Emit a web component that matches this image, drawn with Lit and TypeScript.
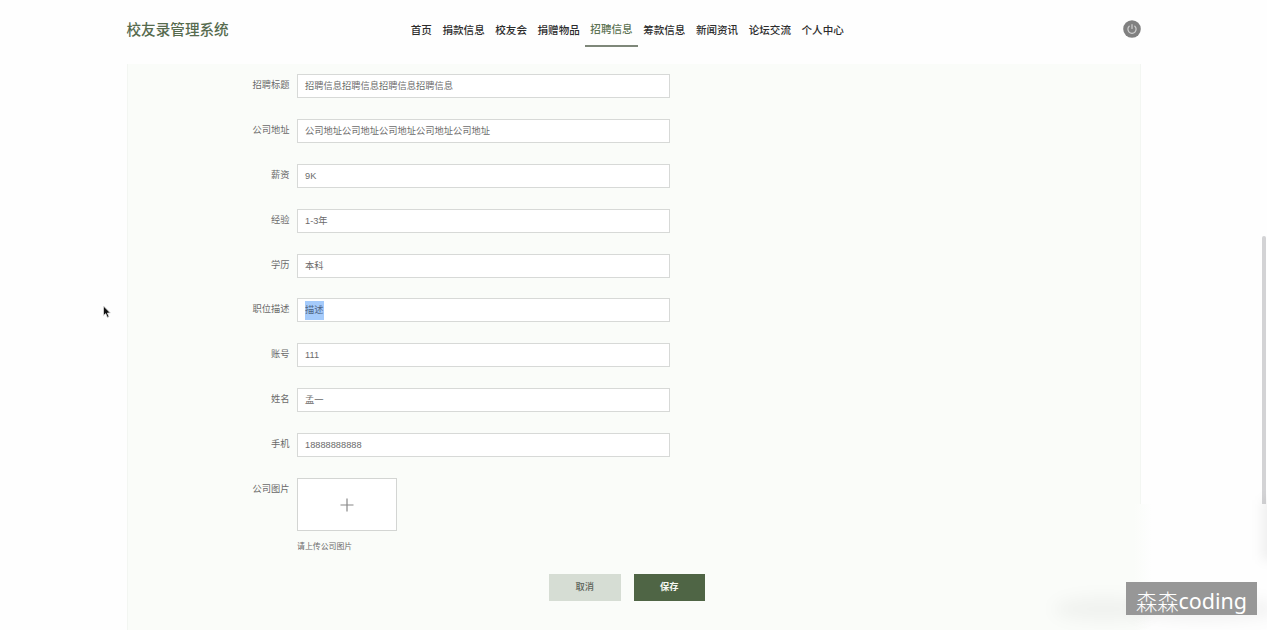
import { LitElement, html, css } from "lit";
import { customElement } from "lit/decorators.js";
import { classMap } from "lit/directives/class-map.js";

const NAV = ["首页", "捐款信息", "校友会", "捐赠物品", "招聘信息", "筹款信息", "新闻资讯", "论坛交流", "个人中心"];

const FIELDS: { label: string; value: string; selected?: boolean }[] = [
  { label: "招聘标题", value: "招聘信息招聘信息招聘信息招聘信息" },
  { label: "公司地址", value: "公司地址公司地址公司地址公司地址公司地址" },
  { label: "薪资", value: "9K" },
  { label: "经验", value: "1-3年" },
  { label: "学历", value: "本科" },
  { label: "职位描述", value: "描述", selected: true },
  { label: "账号", value: "111" },
  { label: "姓名", value: "孟一" },
  { label: "手机", value: "18888888888" },
];

@customElement("site-header")
export class SiteHeader extends LitElement {
  static styles = css`
    :host { display: block; }
    .bar {
      display: grid;
      grid-template-columns: 279px 1fr auto;
      align-items: start;
      height: 64px;
      margin: 0 126.5px;
      box-sizing: border-box;
      padding-top: 12px;
    }
    .brand { font-size: 14.6px; line-height: 36px; font-weight: 500; color: #566b4e; }
    .nav { display: flex; }
    .item {
      box-sizing: border-box;
      height: 35px;
      padding: 0 5.3px;
      font-size: 10.56px;
      line-height: 36px;
      font-weight: 500;
      color: #2c2c2c;
      white-space: nowrap;
    }
    .active { color: #5d7354; line-height: 35px; border-bottom: 2px solid #7e8779; }
    .power { display: block; width: 18px; height: 18px; margin-top: 8px; }
  `;
  render() {
    return html`<header class="bar">
      <div class="brand">校友录管理系统</div>
      <nav class="nav">
        ${NAV.map((n) => html`<a class=${classMap({ item: true, active: n === "招聘信息" })}>${n}</a>`)}
      </nav>
      <svg class="power" viewBox="0 0 18 18" fill="none" stroke-linecap="round">
        <circle cx="9" cy="9" r="8.8" fill="#808080" />
        <path d="M6.2 6.2A4.1 4.1 0 1 0 11.8 6.2M9 4.6V8.4" stroke="#cfcfcf" stroke-width="1.2" />
      </svg>
    </header>`;
  }
}

@customElement("form-row")
export class FormRow extends LitElement {
  static properties = { label: {} };
  declare label: string;
  static styles = css`
    :host { display: grid; grid-template-columns: 163px 373px; column-gap: 7.5px; }
    .label { text-align: right; font-size: 9.25px; line-height: 22px; color: #696969; }
  `;
  render() {
    return html`<div class="label">${this.label}</div><slot></slot>`;
  }
}

@customElement("app-root")
export class AppRoot extends LitElement {
  static styles = css`
    :host {
      display: block;
      position: relative;
      height: 630px;
      overflow: hidden;
      background: #fefefe;
      font-family: "Liberation Sans", "Noto Sans CJK SC", sans-serif;
    }
    .panel {
      box-sizing: border-box;
      height: 566px;
      margin: 0 126.5px;
      padding-top: 10px;
      background: #fafcf9;
      border: 1px solid #f3f6f2;
      border-top: 0;
      border-bottom: 0;
    }
    .rows { display: grid; row-gap: 20.9px; margin-left: -1px; }
    .input {
      box-sizing: border-box;
      display: flex;
      align-items: center;
      height: 24px;
      padding: 0 7px;
      background: #fff;
      border: 1px solid #d7d9d7;
      font-size: 9.25px;
      line-height: 20px;
      color: #6b6b6b;
      white-space: nowrap;
    }
    .selected { background: #a5cbfb; color: #4e6483; line-height: 19px; margin-top: 1px; }
    .upload { display: flex; flex-direction: column; align-items: flex-start; }
    .picker {
      box-sizing: border-box;
      display: grid;
      place-items: center;
      width: 100px;
      height: 53px;
      background: #fff;
      border: 1px solid #d3d5d3;
    }
    .plus { width: 14px; height: 14px; }
    .hint { margin-top: 9.5px; font-size: 7.9px; line-height: 12px; color: #6a6a6a; }
    .actions { display: flex; gap: 13px; margin: 21.3px 0 0 421.5px; }
    .btn {
      width: 71.5px;
      height: 27px;
      line-height: 27px;
      text-align: center;
      font-size: 9.25px;
      font-weight: 500;
      background: #d6ddd4;
      color: #5c635a;
    }
    .save { background: #4f6545; color: #f5f8f3; font-weight: 700; }
    .scroll {
      position: absolute;
      right: 1px;
      top: 236px;
      width: 4px;
      height: 268px;
      border-radius: 2px 2px 0 0;
      background: #d3d3d5;
    }
    .haze { position: absolute; border-radius: 50%; }
    .haze-left { left: 1054px; top: 597px; width: 100px; height: 24px; background: rgba(0, 0, 0, 0.04); filter: blur(8px); }
    .haze-right { left: 1262px; top: 500px; width: 16px; height: 60px; border-radius: 0; background: rgba(0, 0, 0, 0.06); filter: blur(6px); }
    .haze-under { left: 1130px; top: 598px; width: 150px; height: 22px; background: rgba(0, 0, 0, 0.05); filter: blur(8px); }
    .fade { position: absolute; left: 1134px; top: 504px; width: 18px; height: 126px; background: linear-gradient(90deg, #fafcf9, #fefefe); }
    .tag {
      position: absolute;
      left: 1126px;
      top: 582px;
      width: 131px;
      height: 33px;
      display: flex;
      justify-content: center;
      background: #979797;
      color: #fff;
      font-family: "Noto Sans", "Noto Sans CJK SC", sans-serif;
      font-size: 21.5px;
      line-height: 38px;
      white-space: nowrap;
    }
    .tag-cjk { font-family: "Noto Sans CJK SC", sans-serif; font-weight: 300; font-size: 21.2px; }
    .cursor { position: absolute; left: 102px; top: 305px; width: 10px; height: 15px; }
  `;
  render() {
    return html`
      <site-header></site-header>
      <main class="panel">
        <div class="rows">
          ${FIELDS.map(
            (f) => html`<form-row .label=${f.label}>
              <div class="input"><span class=${classMap({ selected: !!f.selected })}>${f.value}</span></div>
            </form-row>`
          )}
          <form-row .label=${"公司图片"}>
            <div class="upload">
              <div class="picker">
                <svg class="plus" viewBox="0 0 14 14"><path d="M7 .5V13.5M.5 7H13.5" stroke="#888" stroke-width="1.2" /></svg>
              </div>
              <div class="hint">请上传公司图片</div>
            </div>
          </form-row>
        </div>
        <div class="actions">
          <div class="btn">取消</div>
          <div class="btn save">保存</div>
        </div>
      </main>
      <div class="scroll"></div>
      <div class="fade"></div>
      <div class="haze haze-left"></div>
      <div class="haze haze-right"></div>
      <div class="haze haze-under"></div>
      <div class="tag"><span class="tag-cjk">森森</span><span>coding</span></div>
      <svg class="cursor" viewBox="0 0 10 15">
        <path d="M1.5 1V10.6L3.7 8.6L5.4 12.4L7 11.7L5.4 8H8.4Z" fill="#111" stroke="#ddd" stroke-width=".8" />
      </svg>
    `;
  }
}
